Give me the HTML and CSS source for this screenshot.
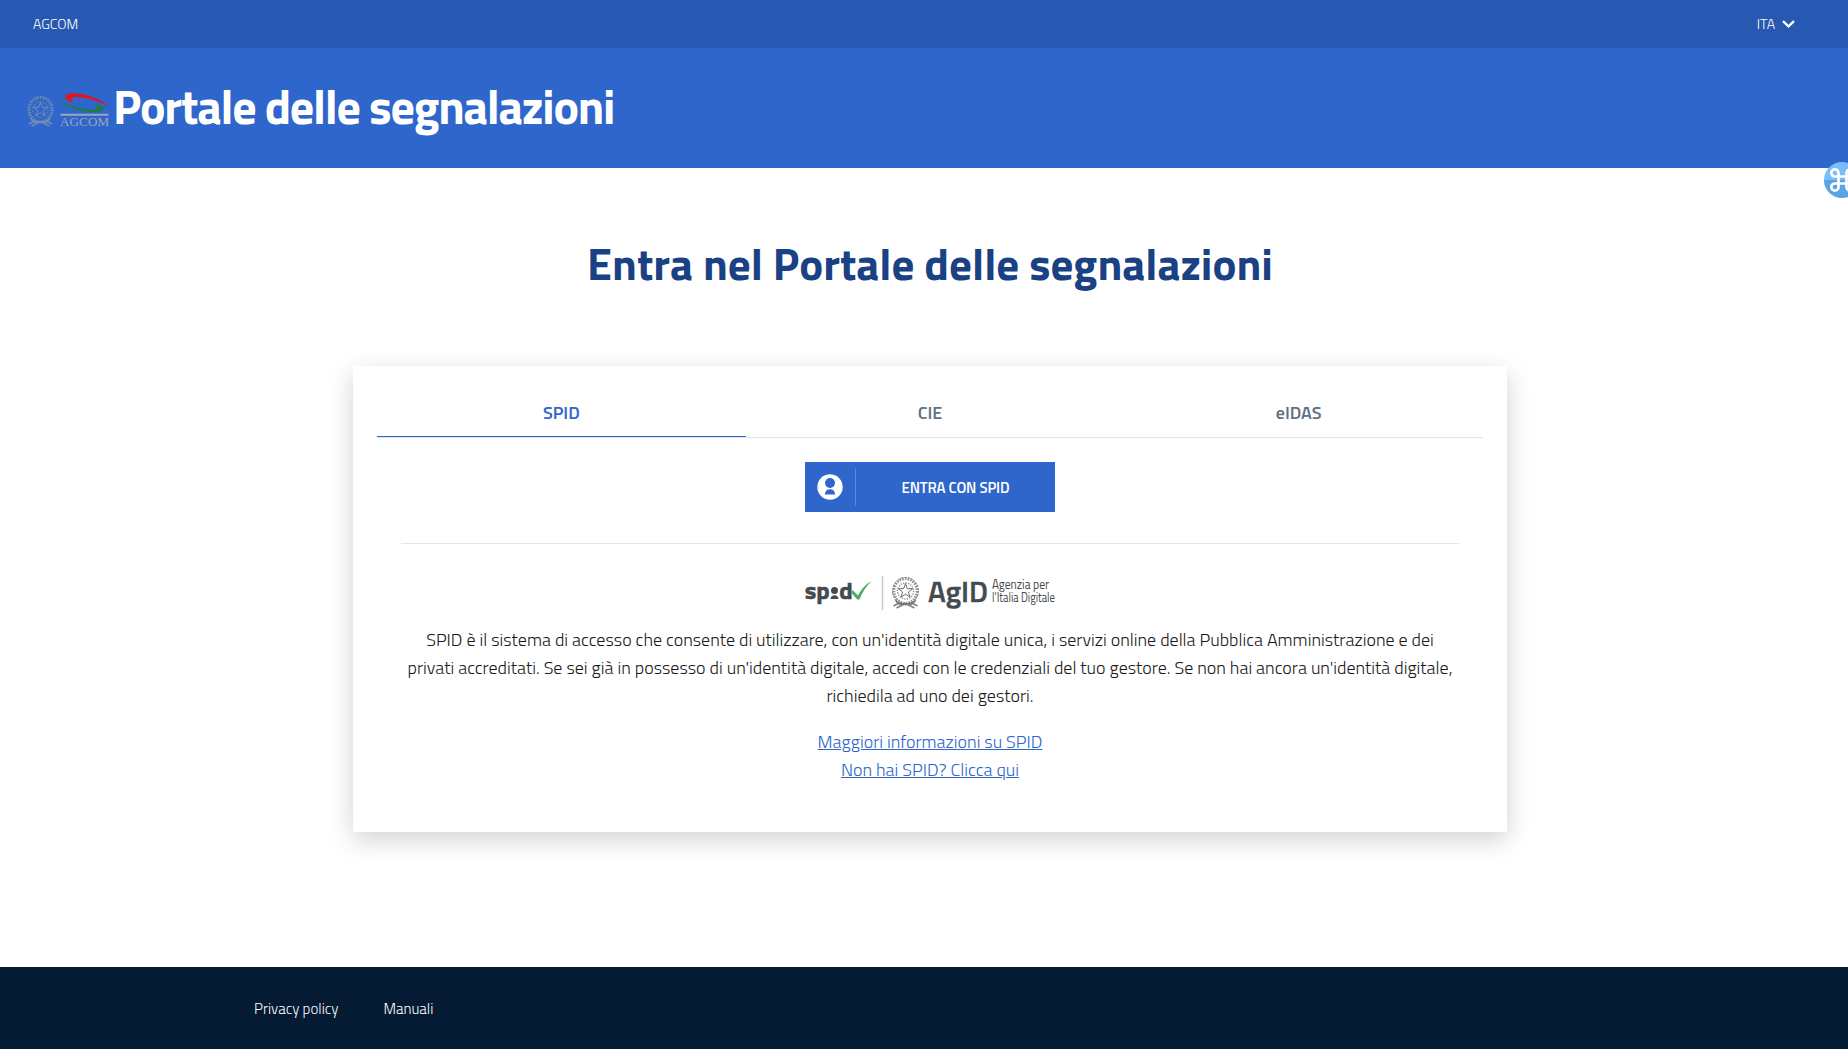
FILE: index.html
```
<!DOCTYPE html>
<html lang="it">
<head>
<meta charset="utf-8">
<title>Portale delle segnalazioni</title>
<link rel="stylesheet" href="styles.css">
</head>
<body>
<svg width="0" height="0" class="defs" aria-hidden="true">
  <symbol id="emblem" viewBox="0 0 28 32">
    <g fill="none" stroke="currentColor">
      <ellipse cx="14" cy="14" rx="11.7" ry="12.5" stroke-width="3" stroke-dasharray="1.7 1.1" opacity=".75"/>
      <ellipse cx="14" cy="14" rx="13" ry="13.5" stroke-width=".7" stroke-dasharray="2.5 1.3"/>
      <circle cx="14" cy="14" r="8" stroke-width="1.6" stroke-dasharray="1.2 1.3" opacity=".7"/>
      <path d="M14 6.500l1.800 5.100 5.400.1-4.300 3.300 1.600 5.200-4.500-3.100-4.500 3.100 1.600-5.200-4.300-3.300 5.400-.1z" stroke-width="1"/>
      <path d="M4 23c3 5 7 5 10 3.500 3 1.500 7 1.500 10-3.500M2 29l6-3 6 1.500 6-1.500 6 3M5 31l7-3.500M23 31l-7-3.500" stroke-width="1.800" opacity=".85"/>
    </g>
  </symbol>
</svg>

<header>
  <div class="topbar">
    <a class="owner">AGCOM</a>
    <div class="lang"><span>ITA</span>
      <svg width="13" height="8" viewBox="0 0 13 8"><path d="M1 1.200l5.500 5.200 5.500-5.200" fill="none" stroke="#fff" stroke-width="2.300"/></svg>
    </div>
  </div>
  <div class="brand">
    <svg class="brand-logo" width="83" height="36" viewBox="0 0 83 36">
      <svg x="0" y="4" width="27" height="31" viewBox="0 0 28 32" color="#8496ab"><use href="#emblem" opacity=".9"/></svg>
      <path d="M43.500 1.300C55 1.100 73 5.500 82 14.800 71 8 56 4.500 47.500 5c-4 .4-4.300 3.300-.5 6.200C37.500 8.500 35 3 43.500 1.300z" fill="#e3141f"/>
      <path d="M33.500 7.500C42 15 57 18 66 17.500c5-.5 5.700-3.700 2.500-6.500 9 3.200 11.500 7.500 3 8.800C57 21.500 38 16 33.500 7.500z" fill="#1e7e43"/>
      <path d="M33.500 22.800h48" stroke="#9ba8b8" stroke-width="2"/>
      <text x="33" y="34.300" class="brand-word" textLength="49" lengthAdjust="spacing">AGCOM</text>
    </svg>
    <div class="brand-title">Portale delle segnalazioni</div>
  </div>
</header>

<main>
  <h1>Entra nel Portale delle segnalazioni</h1>
  <section class="card">
    <nav class="tabs">
      <a class="tab active">SPID</a>
      <a class="tab">CIE</a>
      <a class="tab">eIDAS</a>
    </nav>
    <a class="enter">
      <span class="enter-icon">
        <svg width="26" height="26" viewBox="0 0 26 26"><circle cx="13" cy="13" r="12.700" fill="#fff"/><circle cx="13" cy="9" r="5" fill="#2e66cb"/><path d="M7.800 20.500c.3-3.500 2.200-5.300 5.200-5.300s4.900 1.800 5.200 5.300z" fill="#2e66cb"/></svg>
      </span>
      <span class="enter-label">ENTRA CON SPID</span>
    </a>
    <hr>
    <svg class="partners" width="250" height="34" viewBox="0 0 250 34">
      <g fill="#434a50">
        <text x="-.3" y="23" class="spid-word" textLength="25" lengthAdjust="spacingAndGlyphs">sp</text>
        <circle cx="29.500" cy="14.500" r="3.500"/>
        <path d="M25.500 23c.3-2.600 1.600-3.800 4-3.800s3.700 1.200 4 3.800z"/>
        <text x="34.300" y="23" class="spid-word" textLength="13.500" lengthAdjust="spacingAndGlyphs">d</text>
      </g>
      <path d="M45.500 16l2.500-1.700 5 5.200C56 13.500 60.500 8 66.500 5.200 61 10.500 57 16.500 54.500 23.500h-2.300z" fill="#4fae64"/>
      <path d="M77.500 0v34" stroke="#c8cacc" stroke-width="1.500"/>
      <svg x="86" y="1" width="29" height="32" viewBox="0 0 28 32" color="#5c6064"><use href="#emblem" opacity=".9"/></svg>
      <text x="123" y="25.500" class="agid" textLength="60" lengthAdjust="spacingAndGlyphs">AgID</text>
      <text x="187" y="13" class="agid-sub" textLength="57" lengthAdjust="spacingAndGlyphs">Agenzia per</text>
      <text x="187" y="25.500" class="agid-sub" textLength="63" lengthAdjust="spacingAndGlyphs">l'Italia Digitale</text>
    </svg>
    <p>SPID è il sistema di accesso che consente di utilizzare, con un'identità digitale unica, i servizi online della Pubblica Amministrazione e dei<br>privati accreditati. Se sei già in possesso di un'identità digitale, accedi con le credenziali del tuo gestore. Se non hai ancora un'identità digitale,<br>richiedila ad uno dei gestori.</p>
    <div class="links">
      <a>Maggiori informazioni su SPID</a>
      <a>Non hai SPID? Clicca qui</a>
    </div>
  </section>
</main>

<footer>
  <a>Privacy policy</a>
  <a>Manuali</a>
</footer>

<div class="shortcut">
  <svg width="36" height="36" viewBox="0 0 36 36">
    <path d="M0 18a18 18 0 0 1 36 0z" fill="#7bbcfb"/><path d="M0 18a18 18 0 0 0 36 0z" fill="#5ba3e2"/>
    <path d="M14.500 14.500h8v7h-8zM14.500 14.500h-3.600a3.600 3.600 0 1 1 3.600-3.600zM22.500 14.500v-3.600a3.600 3.600 0 1 1 3.600 3.600zM14.500 21.500v3.600a3.600 3.600 0 1 1-3.600-3.600zM22.500 21.500h3.600a3.600 3.600 0 1 1-3.600 3.600z" fill="none" stroke="#fff" stroke-width="2.700"/>
  </svg>
</div>
</body>
</html>
```
FILE: styles.css
```
* { box-sizing: border-box; }
body {
  margin: 0;
  height: 1049px;
  display: flex;
  flex-direction: column;
  background: #fff;
  color: #19191a;
  font-family: "Titillium Web", Roboto, sans-serif;
  font-size: 18px;
  overflow: hidden;
}
.defs { display: block; flex: none; height: 0; }

.topbar {
  height: 48px;
  padding: 0 53px 1px 33px;
  display: flex;
  align-items: center;
  justify-content: space-between;
  background: #2859b2;
  color: #fff;
  font-size: 14px;
  font-weight: 300;
}
.lang { display: flex; align-items: center; gap: 7px; }

.brand {
  height: 120px;
  padding-left: 27px;
  display: flex;
  align-items: center;
  background: #2e66cb;
}
.brand-logo { margin-top: 4px; }
.brand-word { font: 13px "Liberation Serif", serif; fill: #9ba8b8; }
.brand-title {
  margin: -4px 0 0 3px;
  color: #fff;
  font-size: 48px;
  font-weight: 700;
  letter-spacing: -1.24px;
  white-space: nowrap;
}

main { flex: 1; padding: 67px 0 0 353px; }
h1 {
  width: 1154px;
  margin: 0 0 75px;
  line-height: 56px;
  text-align: center;
  color: #1a4184;
  font-size: 45px;
  font-weight: 700;
}
.card {
  width: 1154px;
  height: 466px;
  padding: 24px 24px 0;
  display: flex;
  flex-direction: column;
  align-items: center;
  background: #fff;
  box-shadow: 0 8px 24px rgba(0, 0, 0, .18);
}
.tabs { align-self: stretch; display: flex; border-bottom: 1px solid #dde3f1; }
.tab {
  flex: 1;
  height: 47px;
  border-bottom: 1px solid transparent;
  line-height: 46px;
  text-align: center;
  color: #5d7083;
  font-weight: 600;
}
.active { color: #2e66cb; border-color: #2e66cb; }

.enter { margin-top: 24px; width: 250px; height: 50px; display: flex; align-items: center; background: #2e66cb; color: #fff; }
.enter-icon { width: 51px; height: 38px; display: grid; place-items: center; border-right: 1px solid #4a8fdf; }
.enter-label { flex: 1; text-align: center; font-size: 15px; font-weight: 600; letter-spacing: -.15px; }
hr { width: 1058px; height: 1px; margin: 31px 0 32px; border: 0; background: #e3e4e6; }

.partners { flex: none; }
.spid-word { font-size: 24px; font-weight: 700; stroke: #434a50; stroke-width: .5px; }
.agid { font-size: 30px; font-weight: 600; fill: #434a50; stroke: #434a50; stroke-width: .4px; }
.agid-sub { font-size: 12.5px; font-weight: 400; fill: #434a50; }

p { margin: 16px 0 18px; line-height: 28px; text-align: center; font-weight: 300; white-space: nowrap; }
.links { display: flex; flex-direction: column; align-items: center; line-height: 28px; font-weight: 300; }
.links a { color: #2e66cb; text-decoration: underline; }

footer {
  height: 82px;
  padding-left: 254px;
  display: flex;
  align-items: center;
  gap: 45px;
  background: #051a33;
  color: #fff;
  font-size: 15px;
  font-weight: 300;
}

.shortcut { position: absolute; top: 162px; left: 1824px; width: 24px; height: 36px; overflow: hidden; }
```
